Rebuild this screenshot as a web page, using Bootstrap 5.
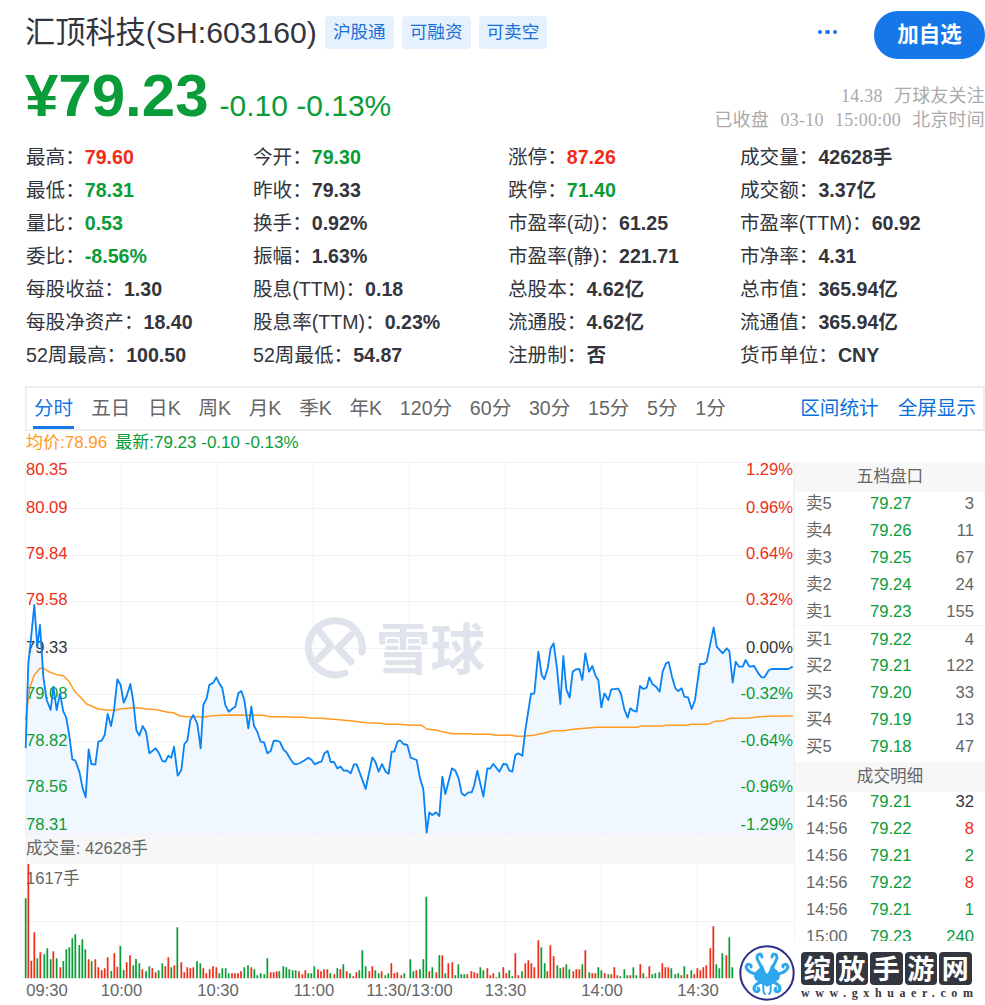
<!DOCTYPE html>
<html lang="zh-CN">
<head>
<meta charset="utf-8">
<title>汇顶科技(SH:603160)</title>
<link href="https://cdn.jsdelivr.net/npm/bootstrap@5.3.0/dist/css/bootstrap.min.css" rel="stylesheet">
<style>
html,body{margin:0;background:#fff}
body{width:985px;height:1005px;overflow:hidden;position:relative;color:#33353c;font-family:"Liberation Sans","Noto Sans CJK SC",sans-serif}
.page-wrap{padding-left:25px}
.head-row{height:63px;padding-top:11px}
.stock-title{font-size:30.2px;line-height:44px;color:#33353c;margin-right:8px}
.market-tag{font-size:17.6px;line-height:33px;height:33px;padding:0 8px;border-radius:4px;background:#e5f1fd;color:#1a6fd8;margin-top:5px;margin-right:8px}
.more-dots{margin-left:auto;margin-right:37px;height:42px;gap:3px}
.more-dots i{display:block;width:4.5px;height:4.5px;border-radius:50%;background:#1677e8}
.follow-btn{width:111px;height:48px;border-radius:24px;background:#1677e8;color:#fff;font-size:21.5px;font-weight:700;border:0;padding:0;line-height:48px}
.price-row{height:78px}
.price-now{font-size:60px;font-weight:700;line-height:62px;color:#0a9c38}
.price-chg{font-size:30px;line-height:30px;color:#0a9c38;margin-left:11px;padding-bottom:6px}
.price-meta{font-family:"Liberation Serif","Noto Sans CJK SC",serif;font-size:17.9px;line-height:24px;color:#aaa;word-spacing:6.5px;letter-spacing:.3px;text-align:right;padding-top:21px}
.stat-grid{display:grid;grid-template-columns:227px 255px 232px 245px;grid-auto-rows:33px;font-size:19.6px;line-height:33px;padding-left:1px;margin-bottom:14px}
.stat-grid b{font-weight:700;color:#33353c}
.stat-grid b.up{color:#f02b16}
.stat-grid b.down{color:#0a9c38}
.tab-bar{height:45px;border:2px solid #eee;font-size:19.6px;padding:0 7px 0 6px}
.tab-bar .nav-link{padding:0;margin-right:17.7px;color:#666;line-height:41px;height:41px}
.tab-bar .nav-link.on{color:#1677e8;border-bottom:3px solid #1677e8;padding:0 1px 0 1px;margin-right:17px;margin-left:0}
.tab-bar .tool-link{color:#0a6fdc;line-height:41px;text-decoration:none;margin-left:19px}
.legend-row{height:31px;font-size:17px;line-height:24px;padding-left:1px}
.leg-avg{color:#ff9a1f;margin-right:8px}
.leg-new{color:#0a9c38}
.chart-col{width:769px}
.chart-col svg{display:block;overflow:visible}
.axis{font-size:16.6px;font-family:"Liberation Sans","Noto Sans CJK SC",sans-serif}
.c-up{fill:#ec3018}.c-dn{fill:#0a9c38}.c-mid{fill:#33353c}.c-gr{fill:#666}
.vol-title{height:29px;background:#f7f7f7;font-size:16.6px;line-height:28px;color:#666;padding-left:1px}
.side-col{width:191px;font-size:16.6px;border-left:1px solid #f2f2f2}
.side-head{height:30px;background:#f7f7f7;color:#666;text-align:center;line-height:29px;font-size:16.6px}
.quote-rows{margin-top:-2px;margin-bottom:2px}
.quote-rows.deal-rows{margin-top:-4px}
.quote-line{display:grid;grid-template-columns:64px 1fr auto;padding:0 11px;height:27px;line-height:27px;color:#666}
.quote-line .pr{color:#0a9c38}
.gap-line{border-top:1px solid #f4f4f4}
.qty-dark{color:#33353c}.qty-up{color:#ec3018}.qty-dn{color:#0a9c38}
.site-mark{position:absolute;right:0;bottom:0;width:191px;height:64px;background:#fff}
.octo-mark{position:absolute;left:738px;top:945px;width:58px;height:58px;background:#fff;border-radius:50%}
.brand-tiles{position:absolute;left:801px;top:952px;gap:2px}
.brand-tiles span{display:block;width:32.5px;height:32.5px;background:#33363f;color:#fff;border-radius:4px;text-align:center;font-size:27px;line-height:31px;font-weight:700;font-family:"Noto Sans CJK SC",sans-serif}
.brand-url{position:absolute;left:801px;top:986px;font-family:"Liberation Serif",serif;font-weight:700;font-size:12px;line-height:14px;letter-spacing:5.6px;color:#33363f;white-space:nowrap}
</style>
</head>
<body>
<div class="page-wrap">
  <div class="head-row d-flex align-items-start">
    <div class="stock-title">汇顶科技(SH:603160)</div>
    <span class="market-tag">沪股通</span>
    <span class="market-tag">可融资</span>
    <span class="market-tag">可卖空</span>
    <div class="more-dots d-flex align-items-center"><i></i><i></i><i></i></div>
    <button class="follow-btn btn" type="button">加自选</button>
  </div>
  <div class="price-row d-flex">
    <div class="d-flex align-items-end" style="height:64px">
      <span class="price-now">¥79.23</span>
      <span class="price-chg">-0.10 -0.13%</span>
    </div>
    <div class="price-meta ms-auto">14.38 万球友关注<br>已收盘 03-10 15:00:00 北京时间</div>
  </div>
  <div class="stat-grid">
    <div>最高：<b class="up">79.60</b></div><div>今开：<b class="down">79.30</b></div><div>涨停：<b class="up">87.26</b></div><div>成交量：<b>42628手</b></div>
    <div>最低：<b class="down">78.31</b></div><div>昨收：<b>79.33</b></div><div>跌停：<b class="down">71.40</b></div><div>成交额：<b>3.37亿</b></div>
    <div>量比：<b class="down">0.53</b></div><div>换手：<b>0.92%</b></div><div>市盈率(动)：<b>61.25</b></div><div>市盈率(TTM)：<b>60.92</b></div>
    <div>委比：<b class="down">-8.56%</b></div><div>振幅：<b>1.63%</b></div><div>市盈率(静)：<b>221.71</b></div><div>市净率：<b>4.31</b></div>
    <div>每股收益：<b>1.30</b></div><div>股息(TTM)：<b>0.18</b></div><div>总股本：<b>4.62亿</b></div><div>总市值：<b>365.94亿</b></div>
    <div>每股净资产：<b>18.40</b></div><div>股息率(TTM)：<b>0.23%</b></div><div>流通股：<b>4.62亿</b></div><div>流通值：<b>365.94亿</b></div>
    <div>52周最高：<b>100.50</b></div><div>52周最低：<b>54.87</b></div><div>注册制：<b>否</b></div><div>货币单位：<b>CNY</b></div>
  </div>
  <div class="tab-bar d-flex">
    <nav class="nav flex-nowrap">
      <a class="nav-link on" href="#">分时</a><a class="nav-link" href="#">五日</a><a class="nav-link" href="#">日K</a><a class="nav-link" href="#">周K</a><a class="nav-link" href="#">月K</a><a class="nav-link" href="#">季K</a><a class="nav-link" href="#">年K</a><a class="nav-link" href="#">120分</a><a class="nav-link" href="#">60分</a><a class="nav-link" href="#">30分</a><a class="nav-link" href="#">15分</a><a class="nav-link" href="#">5分</a><a class="nav-link" href="#">1分</a>
    </nav>
    <div class="ms-auto d-flex"><a class="tool-link" href="#">区间统计</a><a class="tool-link" href="#">全屏显示</a></div>
  </div>
  <div class="legend-row"><span class="leg-avg">均价:78.96</span><span class="leg-new">最新:79.23 -0.10 -0.13%</span></div>
  <div class="d-flex">
    <div class="chart-col">
      <svg width="769" height="373" viewBox="25 462 769 373" class="axis">
        <path fill="none" stroke="#f2f2f2" d="M25 462.5H794M25 508.5H794M25 555.5H794M25 601.5H794M25 648.5H794M25 694.5H794M25 741.5H794M25 787.5H794M25 834.5H794M25.5 462V835M121.5 462V835M217.5 462V835M313.5 462V835M409.5 462V835M505.5 462V835M601.5 462V835M697.5 462V835M793.5 462V835"/>
        <g fill="none" stroke="#dfe4ec" stroke-width="7" stroke-linecap="round" stroke-linejoin="round">
          <path d="M345 673 A27 27 0 1 1 362 652"/>
          <path d="M320 632 L331 646 L318 659"/>
          <path d="M351 635 L338 648 L351 662"/>
        </g>
        <text x="376" y="669" fill="#dfe4ec" font-size="54.5" font-weight="700">雪球</text>
        <g transform="translate(0,590) scale(.33333)">
          <path fill="#eef6fe" fill-opacity=".85" d="M77 732L77 475 85 220 90 175 103 45 112 170 120 105 130 260 140 330 152 360 160 290 170 360 180 310 190 365 198 380 207 430 217 508 226 512 238 545 248 595 257 622 266 478 274 522 286 524 295 455 305 452 314 435 323 372 333 408 342 362 352 268 362 285 371 338 380 318 391 282 400 335 409 420 418 437 428 408 438 425 448 490 458 482 467 475 477 490 487 513 496 515 505 497 514 503 522 470 533 557 544 540 553 462 562 452 571 390 580 375 592 402 602 475 610 345 620 325 628 285 640 278 649 262 657 278 667 295 676 345 686 365 696 357 706 350 715 310 724 303 733 330 745 415 754 350 762 408 772 425 782 455 792 457 802 490 812 483 821 453 830 452 840 456 850 478 860 488 870 505 880 520 888 523 900 519 915 510 925 503 935 510 944 523 955 518 965 514 973 490 983 483 992 516 1002 516 1012 535 1022 530 1031 542 1040 541 1052 550 1062 523 1070 523 1080 550 1097 597 1117 502 1126 515 1136 545 1146 522 1157 545 1166 551 1175 485 1183 485 1192 456 1200 450 1200 732Z"/>
        </g>
        <g transform="translate(400,590) scale(.33333)">
          <path fill="#eef6fe" fill-opacity=".85" d="M0 732L0 450 10 462 22 465 32 503 50 510 60 565 70 598 80 728 88 667 97 675 108 667 118 678 127 560 136 612 156 535 166 542 176 565 185 610 194 617 205 607 215 607 222 588 232 542 250 620 262 535 270 536 280 522 298 545 310 522 320 523 328 542 337 545 346 495 355 490 367 497 376 420 393 312 403 310 415 185 425 255 433 268 443 235 452 175 461 160 471 235 481 342 490 198 499 298 509 323 518 245 528 238 538 237 547 270 556 190 567 245 577 228 587 258 595 270 604 352 613 310 625 330 634 298 655 296 663 312 673 358 683 383 691 355 700 362 710 365 720 288 730 297 740 293 748 262 758 283 768 290 779 305 788 245 798 220 806 216 816 260 826 295 835 303 845 295 853 320 864 322 875 357 885 330 900 222 912 222 920 215 941 112 950 170 968 190 980 175 988 183 998 278 1007 215 1017 230 1028 230 1037 210 1048 230 1062 228 1075 250 1085 262 1093 262 1107 240 1115 237 1165 237 1178 230 1178 732Z"/>
        </g>
        <g class="c-up"><text x="26" y="475">80.35</text><text x="26" y="513">80.09</text><text x="26" y="559">79.84</text><text x="26" y="605">79.58</text></g>
        <text x="26" y="653" class="c-mid">79.33</text>
        <g class="c-dn"><text x="26" y="699">79.08</text><text x="26" y="746">78.82</text><text x="26" y="792">78.56</text><text x="26" y="830">78.31</text></g>
        <g text-anchor="end"><g class="c-up"><text x="793" y="475">1.29%</text><text x="793" y="513">0.96%</text><text x="793" y="559">0.64%</text><text x="793" y="605">0.32%</text></g>
        <text x="793" y="653" class="c-mid">0.00%</text>
        <g class="c-dn"><text x="793" y="699">-0.32%</text><text x="793" y="746">-0.64%</text><text x="793" y="792">-0.96%</text><text x="793" y="830">-1.29%</text></g></g>
        <g fill="none" stroke-linejoin="round">
          <g transform="translate(0,590) scale(.33333)">
            <path stroke="#ff9a1f" stroke-width="4.5" d="M77 390 90 290 103 255 120 235 130 235 150 247 170 254 190 257 205 272 225 305 240 320 260 342 295 357 320 360 345 361 360 357 385 355 410 353 440 357 470 359 500 366 520 368 540 378 560 380 590 380 610 382 630 378 660 376 700 375 790 376 810 380 850 380 880 382 910 382 930 384 960 385 1000 388 1050 392 1100 398 1140 400 1160 403 1200 403"/>
            <path stroke="#0a84f5" stroke-width="5.5" d="M77 475 85 220 90 175 103 45 112 170 120 105 130 260 140 330 152 360 160 290 170 360 180 310 190 365 198 380 207 430 217 508 226 512 238 545 248 595 257 622 266 478 274 522 286 524 295 455 305 452 314 435 323 372 333 408 342 362 352 268 362 285 371 338 380 318 391 282 400 335 409 420 418 437 428 408 438 425 448 490 458 482 467 475 477 490 487 513 496 515 505 497 514 503 522 470 533 557 544 540 553 462 562 452 571 390 580 375 592 402 602 475 610 345 620 325 628 285 640 278 649 262 657 278 667 295 676 345 686 365 696 357 706 350 715 310 724 303 733 330 745 415 754 350 762 408 772 425 782 455 792 457 802 490 812 483 821 453 830 452 840 456 850 478 860 488 870 505 880 520 888 523 900 519 915 510 925 503 935 510 944 523 955 518 965 514 973 490 983 483 992 516 1002 516 1012 535 1022 530 1031 542 1040 541 1052 550 1062 523 1070 523 1080 550 1097 597 1117 502 1126 515 1136 545 1146 522 1157 545 1166 551 1175 485 1183 485 1192 456 1200 450"/>
          </g>
          <g transform="translate(400,590) scale(.33333)">
            <path stroke="#ff9a1f" stroke-width="4.5" d="M0 403 30 406 65 406 80 417 110 421 130 426 160 431 210 431 220 433 270 433 285 436 335 436 350 439 370 439 400 436 430 430 460 422 490 422 520 418 590 412 710 412 725 408 785 408 800 406 860 406 875 403 925 403 945 394 970 392 990 385 1050 384 1070 381 1100 379 1178 378"/>
            <path stroke="#0a84f5" stroke-width="5.5" d="M0 450 10 462 22 465 32 503 50 510 60 565 70 598 80 728 88 667 97 675 108 667 118 678 127 560 136 612 156 535 166 542 176 565 185 610 194 617 205 607 215 607 222 588 232 542 250 620 262 535 270 536 280 522 298 545 310 522 320 523 328 542 337 545 346 495 355 490 367 497 376 420 393 312 403 310 415 185 425 255 433 268 443 235 452 175 461 160 471 235 481 342 490 198 499 298 509 323 518 245 528 238 538 237 547 270 556 190 567 245 577 228 587 258 595 270 604 352 613 310 625 330 634 298 655 296 663 312 673 358 683 383 691 355 700 362 710 365 720 288 730 297 740 293 748 262 758 283 768 290 779 305 788 245 798 220 806 216 816 260 826 295 835 303 845 295 853 320 864 322 875 357 885 330 900 222 912 222 920 215 941 112 950 170 968 190 980 175 988 183 998 278 1007 215 1017 230 1028 230 1037 210 1048 230 1062 228 1075 250 1085 262 1093 262 1107 240 1115 237 1165 237 1178 230"/>
          </g>
        </g>
      </svg>
      <div class="vol-title">成交量: 42628手</div>
      <svg width="769" height="141" viewBox="25 864 769 141" class="axis">
        <path fill="none" stroke="#f2f2f2" d="M25 921.5H794M121.5 864V978M217.5 864V978M313.5 864V978M409.5 864V978M505.5 864V978M601.5 864V978M697.5 864V978"/>
        <text x="26" y="884" class="c-gr">1617手</text>
        <g fill="none" stroke-width="5.2">
          <g transform="translate(0,840) scale(.33333)">
            <path stroke="#0a9c38" d="M77 415V175M112 415V355M133 415V343M142 415V325M152 415V358M170 415V355M190 415V363M199 415V328M208 415V322M217 415V295M226 415V283M238 415V315M247 415V298M256 415V328M275 415V364M334 415V393M361 415V318M371 415V390M400 415V376M408 415V357M418 415V370M438 415V394M448 415V379M476 415V391M487 415V370M514 415V382M532 415V262M591 415V364M601 415V370M658 415V400M667 415V385M677 415V385M686 415V400M733 415V382M744 415V376M763 415V388M772 415V406M782 415V400M793 415V403M802 415V355M838 415V394M850 415V379M859 415V382M868 415V388M878 415V391M887 415V391M925 415V400M934 415V400M943 415V379M991 415V400M1012 415V385M1030 415V373M1050 415V400M1078 415V391M1087 415V331M1097 415V379M1126 415V391M1136 415V400M1156 415V406M1165 415V400"/>
            <path stroke="#f02b16" d="M85 415V72M94 415V362M103 415V277M121 415V337M160 415V334M181 415V382M266 415V358M286 415V358M295 415V382M305 415V391M314 415V385M323 415V352M343 415V340M352 415V380M380 415V367M390 415V346M427 415V388M457 415V385M467 415V397M496 415V379M505 415V352M523 415V376M544 415V367M553 415V397M562 415V382M571 415V385M580 415V382M610 415V385M619 415V400M629 415V388M639 415V379M649 415V382M696 415V400M705 415V400M714 415V400M723 415V394M754 415V382M812 415V397M821 415V397M830 415V394M897 415V394M907 415V403M916 415V391M954 415V388M963 415V394M972 415V388M982 415V388M1003 415V403M1021 415V388M1040 415V394M1060 415V409M1069 415V397M1108 415V394M1117 415V379M1145 415V394M1174 415V370M1183 415V400M1192 415V397"/>
          </g>
          <g transform="translate(400,840) scale(.33333)">
            <path stroke="#0a9c38" d="M13 415V400M31 415V358M40 415V394M60 415V388M70 415V358M79 415V170M97 415V382M118 415V346M136 415V400M166 415V406M175 415V373M184 415V403M193 415V403M241 415V382M250 415V391M289 415V412M298 415V397M328 415V391M337 415V409M366 415V394M424 415V322M434 415V370M472 415V376M481 415V385M499 415V373M508 415V388M547 415V373M568 415V397M595 415V382M604 415V391M625 415V403M661 415V409M673 415V388M682 415V406M700 415V382M709 415V406M730 415V400M757 415V403M766 415V400M778 415V397M814 415V385M826 415V403M835 415V400M853 415V379M874 415V391M949 415V373M958 415V385M967 415V340M988 415V292M997 415V382"/>
            <path stroke="#f02b16" d="M4 415V406M49 415V391M88 415V394M109 415V397M127 415V346M145 415V370M157 415V367M202 415V403M214 415V394M223 415V397M232 415V400M262 415V385M271 415V406M280 415V400M310 415V382M319 415V400M346 415V340M355 415V406M376 415V370M385 415V361M394 415V370M403 415V382M415 415V301M442 415V394M451 415V316M461 415V349M490 415V382M520 415V394M529 415V388M538 415V388M556 415V331M577 415V400M586 415V400M614 415V400M634 415V403M643 415V382M652 415V406M691 415V406M721 415V373M739 415V412M748 415V379M787 415V370M796 415V382M805 415V382M844 415V406M862 415V403M883 415V403M892 415V385M901 415V391M910 415V382M919 415V376M931 415V325M940 415V259M979 415V346"/>
          </g>
        </g>
        <g class="c-gr" text-anchor="middle"><text x="47" y="996">09:30</text><text x="121.5" y="996">10:00</text><text x="218" y="996">10:30</text><text x="314" y="996">11:00</text><text x="409.5" y="996">11:30/13:00</text><text x="505.5" y="996">13:30</text><text x="602" y="996">14:00</text><text x="698" y="996">14:30</text></g>
      </svg>
    </div>
    <div class="side-col">
      <div class="side-head">五档盘口</div>
      <div class="quote-rows">
        <div class="quote-line"><span>卖5</span><span class="pr">79.27</span><span>3</span></div>
        <div class="quote-line"><span>卖4</span><span class="pr">79.26</span><span>11</span></div>
        <div class="quote-line"><span>卖3</span><span class="pr">79.25</span><span>67</span></div>
        <div class="quote-line"><span>卖2</span><span class="pr">79.24</span><span>24</span></div>
        <div class="quote-line"><span>卖1</span><span class="pr">79.23</span><span>155</span></div>
        <div class="quote-line gap-line"><span>买1</span><span class="pr">79.22</span><span>4</span></div>
        <div class="quote-line"><span>买2</span><span class="pr">79.21</span><span>122</span></div>
        <div class="quote-line"><span>买3</span><span class="pr">79.20</span><span>33</span></div>
        <div class="quote-line"><span>买4</span><span class="pr">79.19</span><span>13</span></div>
        <div class="quote-line"><span>买5</span><span class="pr">79.18</span><span>47</span></div>
      </div>
      <div class="side-head">成交明细</div>
      <div class="quote-rows deal-rows">
        <div class="quote-line"><span>14:56</span><span class="pr">79.21</span><span class="qty-dark">32</span></div>
        <div class="quote-line"><span>14:56</span><span class="pr">79.22</span><span class="qty-up">8</span></div>
        <div class="quote-line"><span>14:56</span><span class="pr">79.21</span><span class="qty-dn">2</span></div>
        <div class="quote-line"><span>14:56</span><span class="pr">79.22</span><span class="qty-up">8</span></div>
        <div class="quote-line"><span>14:56</span><span class="pr">79.21</span><span class="qty-dn">1</span></div>
        <div class="quote-line"><span>15:00</span><span class="pr">79.23</span><span class="qty-dn">240</span></div>
      </div>
    </div>
  </div>
</div>
<div class="site-mark"></div>
<div class="octo-mark">
  <svg width="58" height="58" viewBox="-29 -28 58 58">
    <circle r="26.7" fill="#fff" stroke="#2b2f82" stroke-width="2"/>
    <g fill="none" stroke="#2ea8ec" stroke-width="3" stroke-linecap="round">
      <path d="M-5 -3C-6 -9 -9 -11 -10 -15C-10 -20 -5 -20 -5 -16"/>
      <path d="M5 -3C6 -9 9 -11 10 -15C10 -20 5 -20 5 -16"/>
      <path d="M-9 2C-14 0 -20 -1 -21 -6C-20 -10 -15 -9 -16 -6"/>
      <path d="M9 2C14 0 20 -1 21 -6C20 -10 15 -9 16 -6"/>
      <path d="M-6 9C-11 11 -15 14 -12 18C-9 20 -7 17 -9 15"/>
      <path d="M6 9C11 11 15 14 12 18C9 20 7 17 9 15"/>
      <path d="M-4 11C-3 14 -5 19 -2 21" stroke-width="2"/>
      <path d="M4 11C3 14 5 19 2 21" stroke-width="2"/>
    </g>
    <path fill="#2ea8ec" d="M0 14C-4 10 -13 9 -13 3C-13 -2 -8 -3 -7 -6L-4 -8C-3 -4 -2 -1 0 1C2 -1 3 -4 4 -8L7 -6C8 -3 13 -2 13 3C13 9 4 10 0 14Z"/>
  </svg>
</div>
<div class="brand-tiles d-flex"><span>绽</span><span>放</span><span>手</span><span>游</span><span>网</span></div>
<div class="brand-url">www.gxhuaer.com</div>
<script src="https://cdn.jsdelivr.net/npm/bootstrap@5.3.0/dist/js/bootstrap.bundle.min.js"></script>
</body>
</html>
